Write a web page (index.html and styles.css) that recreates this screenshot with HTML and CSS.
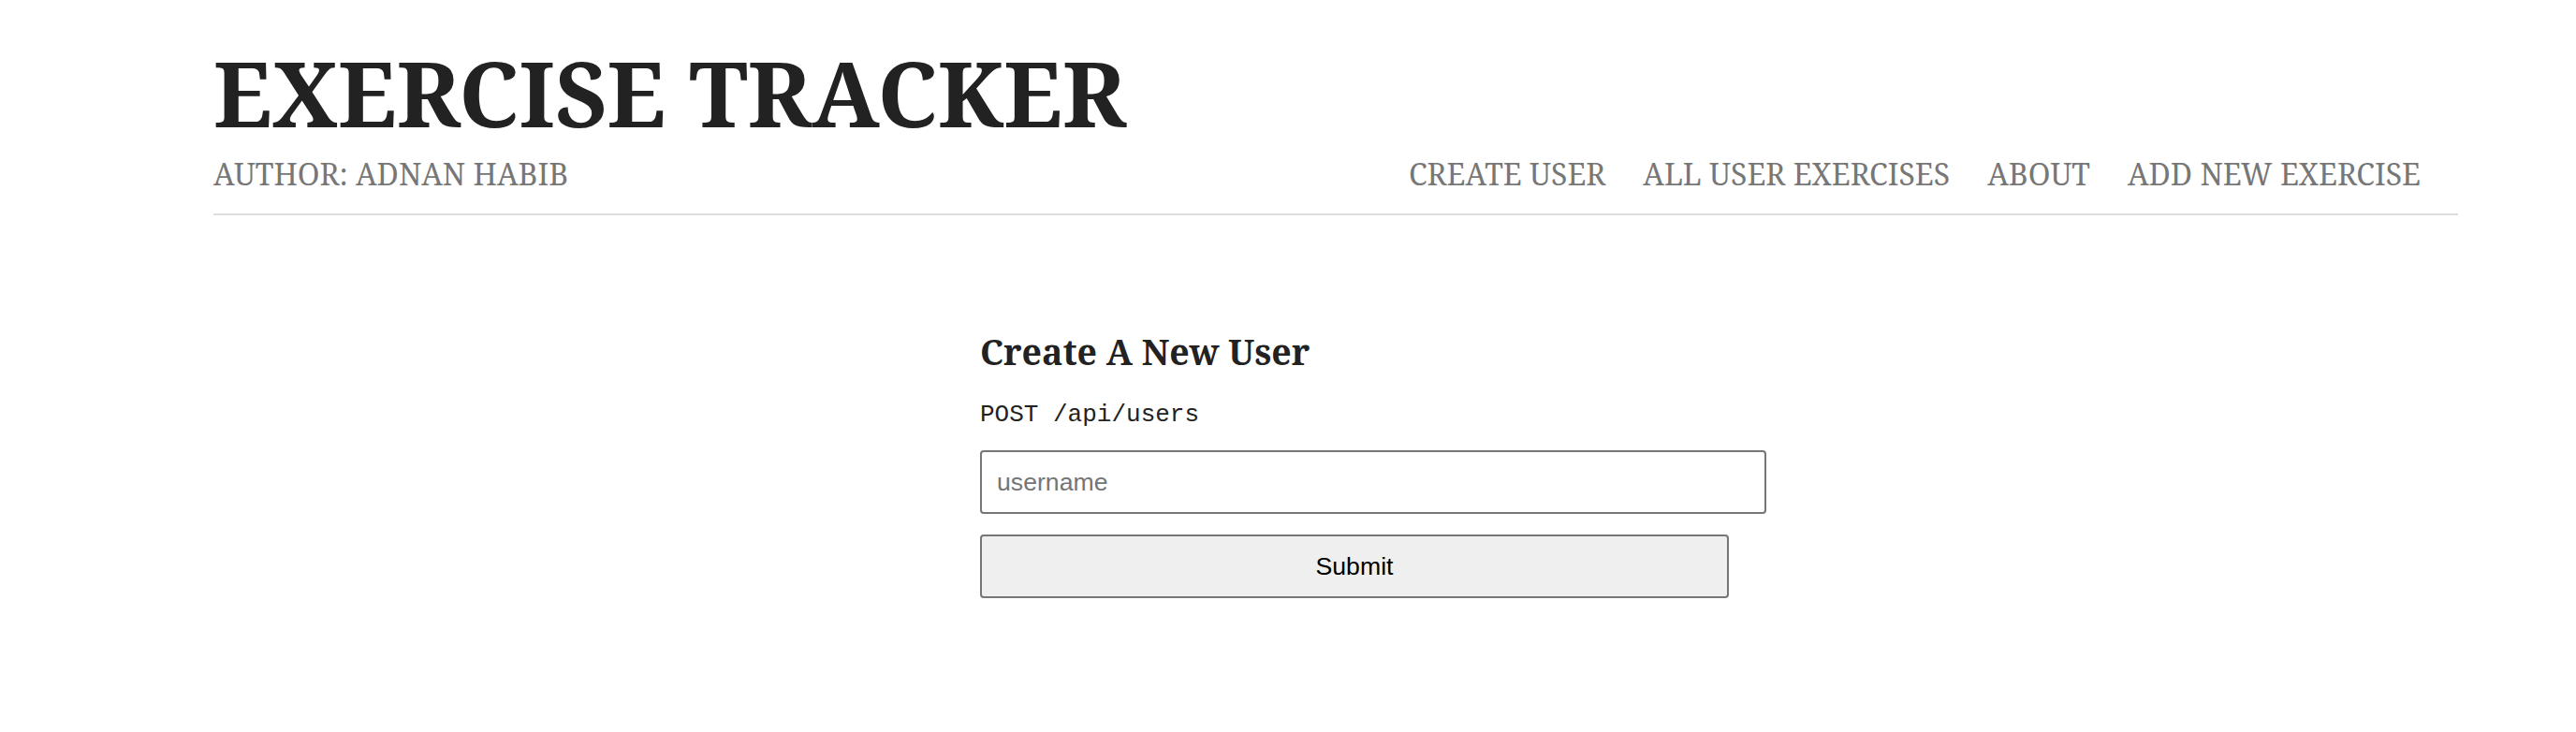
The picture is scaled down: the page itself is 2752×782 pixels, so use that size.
FILE: index.html
```html
<!DOCTYPE html>
<html lang="en">
<head>
<meta charset="utf-8">
<title>Exercise Tracker</title>
<link rel="stylesheet" href="styles.css">
</head>
<body>
<header class="site-header">
  <h1 class="site-title">EXERCISE TRACKER</h1>
  <div class="subbar">
    <span class="author">AUTHOR: ADNAN HABIB</span>
    <nav class="nav">
      <a class="nav-link" href="#">CREATE USER</a>
      <a class="nav-link" href="#">ALL USER EXERCISES</a>
      <a class="nav-link" href="#">ABOUT</a>
      <a class="nav-link" href="#">ADD NEW EXERCISE</a>
    </nav>
  </div>
</header>
<main class="main">
  <form class="user-form">
    <h2 class="form-title">Create A New User</h2>
    <code class="endpoint">POST /api/users</code>
    <input class="text-input" type="text" placeholder="username">
    <button class="submit-btn" type="button">Submit</button>
  </form>
</main>
</body>
</html>
```
FILE: styles.css
```css
html, body {
  margin: 0;
  padding: 0;
  background: #ffffff;
}

body {
  font-family: "Noto Serif", "Droid Serif", "DejaVu Serif", serif;
  color: #222222;
}

.site-header {
  width: 2398px;
  padding: 51px 0 0 228px;
}

.site-title {
  margin: 0;
  font-size: 96px;
  line-height: 96px;
  font-weight: 700;
  color: #222222;
}

.subbar {
  display: flex;
  justify-content: space-between;
  align-items: baseline;
  margin-top: 23px;
  padding-bottom: 26px;
  border-bottom: 2px solid #dddddd;
}

.author,
.nav-link {
  font-size: 32px;
  line-height: 32px;
  color: #777777;
  text-decoration: none;
}

.nav {
  display: flex;
  gap: 40px;
  padding-right: 40px;
}

.main {
  padding-left: 1047px;
}

.user-form {
  display: flex;
  flex-direction: column;
  align-items: flex-start;
}

.form-title {
  margin: 127px 0 0 0;
  font-size: 37.44px;
  line-height: 38px;
  font-weight: 700;
  color: #222222;
}

.endpoint {
  margin-top: 35px;
  font-family: "Liberation Mono", "Courier New", monospace;
  font-size: 26px;
  line-height: 26px;
  color: #222222;
}

.text-input {
  box-sizing: border-box;
  margin: 25px 0 0 0;
  width: 840px;
  height: 68px;
  padding: 0 16px;
  border: 2px solid #767676;
  border-radius: 4px;
  font-family: "Liberation Sans", Arial, sans-serif;
  font-size: 26.67px;
  color: #000000;
  background: #ffffff;
  outline: none;
}

.text-input::placeholder {
  color: #757575;
}

.submit-btn {
  box-sizing: border-box;
  margin: 22px 0 0 0;
  width: 800px;
  height: 68px;
  padding: 0;
  border: 2px solid #767676;
  border-radius: 4px;
  background: #efefef;
  font-family: "Liberation Sans", Arial, sans-serif;
  font-size: 26.67px;
  color: #000000;
}
```
